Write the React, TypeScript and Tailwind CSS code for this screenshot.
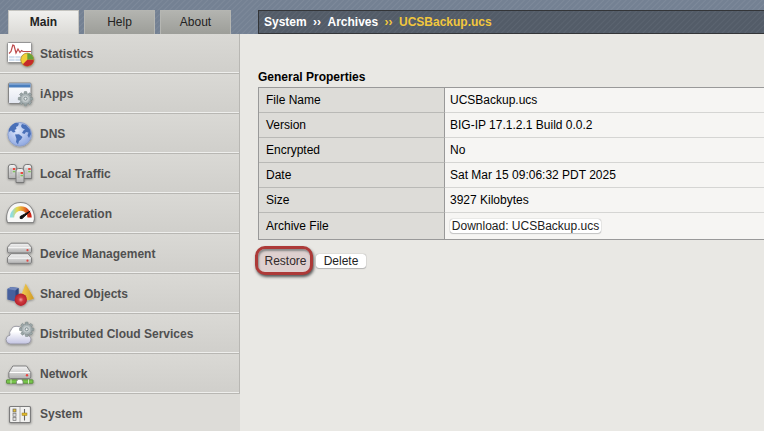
import type { ReactNode } from "react";

function Defs() {
  return (
    <svg className="absolute h-0 w-0" aria-hidden="true">
      <defs>
        <linearGradient id="metal" x1="0" y1="0" x2="0" y2="1">
          <stop offset="0" stopColor="#f3f3f3" />
          <stop offset="1" stopColor="#b3b3b3" />
        </linearGradient>
        <linearGradient id="panel" x1="0" y1="0" x2="0" y2="1">
          <stop offset="0" stopColor="#ffffff" />
          <stop offset="1" stopColor="#e2e6f0" />
        </linearGradient>
        <radialGradient id="ocean" cx=".4" cy=".35" r=".7">
          <stop offset="0" stopColor="#dce6fa" />
          <stop offset="1" stopColor="#8ba5e0" />
        </radialGradient>
        <linearGradient id="gauge" x1="0" y1="0" x2="1" y2="0">
          <stop offset="0" stopColor="#8fdce0" />
          <stop offset=".3" stopColor="#e6d84a" />
          <stop offset=".65" stopColor="#e8892c" />
          <stop offset="1" stopColor="#cc2418" />
        </linearGradient>
        <linearGradient id="cone" x1="0" y1="0" x2="1" y2="0">
          <stop offset="0" stopColor="#f5d25a" />
          <stop offset="1" stopColor="#d19b25" />
        </linearGradient>
        <radialGradient id="ball">
          <stop offset="0" stopColor="#f0a0a0" />
          <stop offset=".4" stopColor="#cf3a3f" />
          <stop offset="1" stopColor="#b5202a" />
        </radialGradient>
        <linearGradient id="cloud" x1="0" y1="0" x2="0" y2="1">
          <stop offset=".3" stopColor="#ffffff" />
          <stop offset="1" stopColor="#c3c4e2" />
        </linearGradient>
        <filter id="soft" x="-20%" y="-20%" width="150%" height="150%">
          <feDropShadow dx=".3" dy="1" stdDeviation=".8" floodColor="#000" floodOpacity=".35" />
        </filter>
      </defs>
    </svg>
  );
}

function Gear({ x, y }: { x: number; y: number }) {
  return (
    <g transform={`translate(${x} ${y})`}>
      <g fill="#9ca7a9" stroke="#75817f" strokeWidth=".5">
        {[0, 45, 90, 135].map((a) => (
          <rect key={a} x="-1.4" y="-7.2" width="2.800" height="14.400" rx=".6" transform={`rotate(${a})`} />
        ))}
      </g>
      <circle r="5.300" fill="#a9b3b5" stroke="#808b8d" strokeWidth=".5" />
      <circle r="3.300" fill="#c5cccd" />
      <circle r="1.500" fill="#eceeee" stroke="#77868a" strokeWidth=".9" />
    </g>
  );
}

function Server({ x, y }: { x: number; y: number }) {
  return (
    <g transform={`translate(${x} ${y})`}>
      <path d="M.5 3Q.5.6 3 .5H6Q8.500.6 8.500 3V14.500H.5Z" fill="url(#metal)" stroke="#777" />
      <path d="M2 5H4.500M2 7H4.500M2 9H4.500" stroke="#aaa" strokeWidth=".8" />
      <rect x="5" y="4" width="2.500" height="2" fill="#e84a40" />
      <rect x="5" y="6.800" width="2.500" height="1.500" fill="#7bc25a" />
    </g>
  );
}

const icons: Record<string, ReactNode> = {
  Statistics: (
    <>
      <rect x="3.500" y="4.500" width="24" height="20" rx="1" fill="#fff" stroke="#959595" />
      <path d="M5 18H27V23H5Z" fill="#d3e0ef" />
      <path d="M5 20.500H27M11 18V24M17 18V24" stroke="#fff" strokeWidth=".7" />
      <path d="M5 15.500L7 13.500L8.800 7L10 7.500L12 15L14 11L16 14.500L17.500 12.500L19 13.500H27" fill="none" stroke="#bd4a4b" strokeWidth="1.200" />
      <circle cx="23.300" cy="21.700" r="6.600" fill="#f0cf38" stroke="#8c6d29" strokeWidth=".6" />
      <path d="M23.300 21.700V15.300A6.400 6.400 0 0 1 29.700 21.700Z" fill="#65a239" />
      <path d="M23.300 21.700H29.700A6.400 6.400 0 0 1 18.800 26.200Z" fill="#c52b2c" />
    </>
  ),
  iApps: (
    <>
      <rect x="4.500" y="5" width="22.500" height="20.500" rx="1" fill="url(#panel)" stroke="#858585" />
      <path d="M5 5.500H26.500V9.500H5Z" fill="#4c7fbd" />
      <path d="M5 6.200H26.500" stroke="#8badd7" />
      <Gear x={21.5} y={20.700} />
    </>
  ),
  DNS: (
    <>
      <circle cx="15.700" cy="16.300" r="11.800" fill="url(#ocean)" stroke="#8c9fcb" />
      <path d="M5 11Q8 5.500 12 4.800L15 5.500L14 8L12 9L12.500 11L10.500 12L11.500 14L9 14.500L7 12.500L5 14Z" fill="#4a70b8" />
      <path d="M11 16.500L15 16.300L18.500 19L17 21.500L15 23L14 26.500L12 24L12.500 21Z" fill="#4a70b8" />
      <path d="M18 6L22 7L26 11.500L27 16L25 20L23.500 17.500L24.500 14.500L22 14L20.500 16L18 15L19.500 12.500L21 11.500L18 10L17 8Z" fill="#4a70b8" />
    </>
  ),
  "Local Traffic": (
    <>
      <Server x={3.8} y={6} />
      <Server x={19.2} y={6} />
      <Server x={11.5} y={10} />
    </>
  ),
  Acceleration: (
    <g transform="translate(.5 -2)">
      <path d="M3 26.500Q1.500 24 2.200 19.500C3.500 11 9 6.500 16 6.500S28.500 11 29.800 19.500Q30.500 24 29 26.500Z" fill="#f8f8f7" stroke="#868686" strokeWidth="1.100" />
      <path d="M7.500 21.500A8.800 9 0 0 1 25.100 21.500" fill="none" stroke="url(#gauge)" strokeWidth="4.300" />
      <path d="M25.600 15.200L17.500 22.600Q14.800 23.400 15.700 20.500Z" fill="#111" stroke="#111" />
    </g>
  ),
  "Device Management": (
    <>
      {[5.2, 15.7].map((y) => (
        <g key={y} transform={`translate(3.500 ${y})`}>
          <path d="M0 4L3.500 0H20.500L24 4V8.700Q24 9.700 22 9.700H2Q0 9.700 0 8.700Z" fill="url(#metal)" stroke="#808080" />
          <path d="M1 4.500H23" stroke="#fafafa" />
          <circle cx="20" cy="7" r="1.100" fill="#e04845" />
        </g>
      ))}
    </>
  ),
  "Shared Objects": (
    <>
      <path d="M3.300 11L7 9L14.500 10V20.500L11.500 23.500L3.300 21.500Z" fill="#46609d" />
      <path d="M3.300 11L7 9L14.500 10L11.500 12.500Z" fill="#6f85ba" />
      <path d="M11.500 12.500L14.500 10V20.500L11.500 23.500Z" fill="#2e467f" />
      <path d="M21.700 5.500L16 20Q23 24 30 20.500Z" fill="url(#cone)" />
      <circle cx="16.800" cy="21.700" r="6.200" fill="url(#ball)" />
    </>
  ),
  "Distributed Cloud Services": (
    <>
      <path d="M6 26Q2 25.500 2 21.500Q2.200 17.500 6 17.200Q4.800 14 7 12Q8.500 8 13 8.300Q18 8.500 19.500 14Q24 13.500 24.500 18Q27.500 18.500 27 22Q26.500 26 22 26Z" fill="url(#cloud)" stroke="#8a8a96" strokeWidth=".8" />
      <Gear x={22.700} y={11.300} />
    </>
  ),
  Network: (
    <>
      <path d="M4.800 14.500L8.800 8H22.500L26.800 14.500V19Q26.800 20.500 25 20.500H6.500Q4.800 20.500 4.800 19Z" fill="url(#metal)" stroke="#808080" />
      <path d="M5.800 14.500H25.800" stroke="#fff" />
      <circle cx="23" cy="17.200" r="1.200" fill="#e84440" />
      <rect x="2.500" y="21.800" width="26.500" height="3.500" rx=".5" fill="#78c74b" stroke="#548536" strokeWidth=".8" />
      <path d="M12.500 26V23.500L14 21.300H17.500L19 23.500V26Z" fill="#fff" stroke="#777" strokeWidth=".7" />
      <path d="M7 21.500V25.600M24.500 21.500V25.600" stroke="#d8efc9" strokeWidth="1" />
    </>
  ),
  System: (
    <>
      <rect x="5.500" y="8.500" width="21" height="16" rx="1" fill="#f1f1ef" stroke="#7b7b7b" strokeWidth="1.200" />
      <path d="M16 9V24" stroke="#aaa" />
      <rect x="9" y="11" width="3" height="3" fill="#e4be30" stroke="#666" strokeWidth=".7" />
      <rect x="9" y="15.300" width="3" height="3" fill="#ddd" stroke="#777" strokeWidth=".7" />
      <rect x="9" y="19.500" width="3" height="3" fill="#ddd" stroke="#777" strokeWidth=".7" />
      <path d="M20.500 11V22.500" stroke="#666" strokeWidth="1.100" />
      <rect x="18" y="15" width="5" height="2.500" fill="#e1b929" stroke="#927a26" strokeWidth=".5" />
    </>
  ),
};

const nav = ["Statistics", "iApps", "DNS", "Local Traffic", "Acceleration", "Device Management", "Shared Objects", "Distributed Cloud Services", "Network", "System"];

const properties: [string, string][] = [
  ["File Name", "UCSBackup.ucs"],
  ["Version", "BIG-IP 17.1.2.1 Build 0.0.2"],
  ["Encrypted", "No"],
  ["Date", "Sat Mar 15 09:06:32 PDT 2025"],
  ["Size", "3927 Kilobytes"],
];

function Tab({ label, active = false }: { label: string; active?: boolean }) {
  return (
    <div
      className={`flex h-[24px] w-[71px] items-center justify-center border border-b-0 pb-px text-[12px] ${
        active
          ? "border-[#c4c4c0] bg-linear-to-b from-[#f0f0ee] to-[#dcdbd7] font-bold text-[#222]"
          : "border-[#b5b6b2] bg-linear-to-b from-[#b3b4b0] to-[#9d9e99] text-[#222]"
      }`}
    >
      {label}
    </div>
  );
}

export default function App() {
  return (
    <div className="flex h-[431px] w-[764px] flex-col overflow-hidden bg-[#e9e8e4] font-['Liberation_Sans',Arial,sans-serif] text-[12px] text-black">
      <Defs />
      <header className="flex h-[34px] shrink-0 items-end bg-[#78849a] bg-[repeating-linear-gradient(135deg,#748193_0px,#748193_2px,#7d899a_3px,#748193_4px)]">
        <div className="flex w-[258px] shrink-0 gap-[5px] pl-[8px]">
          <Tab label="Main" active />
          <Tab label="Help" />
          <Tab label="About" />
        </div>
        <div className="flex h-[24px] flex-1 items-center border border-r-0 border-[#333538] bg-[repeating-linear-gradient(135deg,#535c68_0px,#535c68_2px,#5b6470_3px,#535c68_4px)] pl-[5px] font-bold whitespace-pre text-white">
          <span className="w-[49px]">System</span>
          <span className="w-[14.500px]">››</span>
          <span className="w-[57px]">Archives</span>
          <span className="w-[14.500px] text-[#f2c73d]">››</span>
          <span className="text-[#f2c73d]">UCSBackup.ucs</span>
        </div>
      </header>
      <div className="flex min-h-0 flex-1">
        <nav className="w-[240px] shrink-0 overflow-hidden bg-[#dddcd8]">
          {nav.map((label) => (
            <div
              key={label}
              className={`flex h-[40px] items-center gap-[4px] pl-[4px] font-bold text-[#505050] ${
                label === "System" ? "" : "border-r border-b border-[#b8b7b3] bg-linear-to-b from-[#dad9d5] to-[#d0cfcb] shadow-[inset_0_-1px_0_#eeeeec]"
              }`}
            >
              <svg viewBox="0 0 32 32" className="h-[32px] w-[32px] shrink-0 overflow-visible">
                <g filter="url(#soft)">{icons[label]}</g>
              </svg>
              <span>{label}</span>
            </div>
          ))}
        </nav>
        <main className="min-w-0 flex-1 pt-[36px] pl-[18px]">
          <h1 className="h-[17px] leading-[14px] font-bold">General Properties</h1>
          <div className="border-y border-l border-[#999]">
            {properties.map(([name, value]) => (
              <div key={name} className="flex h-[25px] leading-[24px]">
                <div className="w-[186px] border-r border-b border-[#b9b9b6] border-r-[#999] bg-[#dddcd8] pl-[7px]">{name}</div>
                <div className="flex-1 border-b border-[#d5d5d3] bg-[#f6f5f3] pl-[5px]">{value}</div>
              </div>
            ))}
            <div className="flex h-[26px] leading-[26px]">
              <div className="w-[186px] border-r border-[#999] bg-[#dddcd8] pl-[7px]">Archive File</div>
              <div className="flex flex-1 items-center bg-[#f6f5f3] pl-[5px]">
                <button className="h-[14px] w-[151px] rounded-[3px] bg-white text-center leading-[14px] whitespace-nowrap text-[#222] shadow-[0_0_1px_#777,0_1px_1px_#ccc]">Download: UCSBackup.ucs</button>
              </div>
            </div>
          </div>
          <div className="mt-[5px] ml-[-3px] flex h-[31px] items-center gap-[3px]">
            <button className="flex h-[29px] w-[58px] items-center justify-center rounded-[10px] border-[3px] border-[#ad3a38] bg-[#ded0cf] pl-[3px] text-[#32292a] shadow-[1px_2px_3px_#555,inset_1px_2px_2px_#888]">Restore</button>
            <button className="h-[14px] w-[50px] rounded-[3px] bg-white leading-[14px] text-[#222] shadow-[0_0_1px_#777,0_1px_1px_#bbb]">Delete</button>
          </div>
        </main>
      </div>
    </div>
  );
}
